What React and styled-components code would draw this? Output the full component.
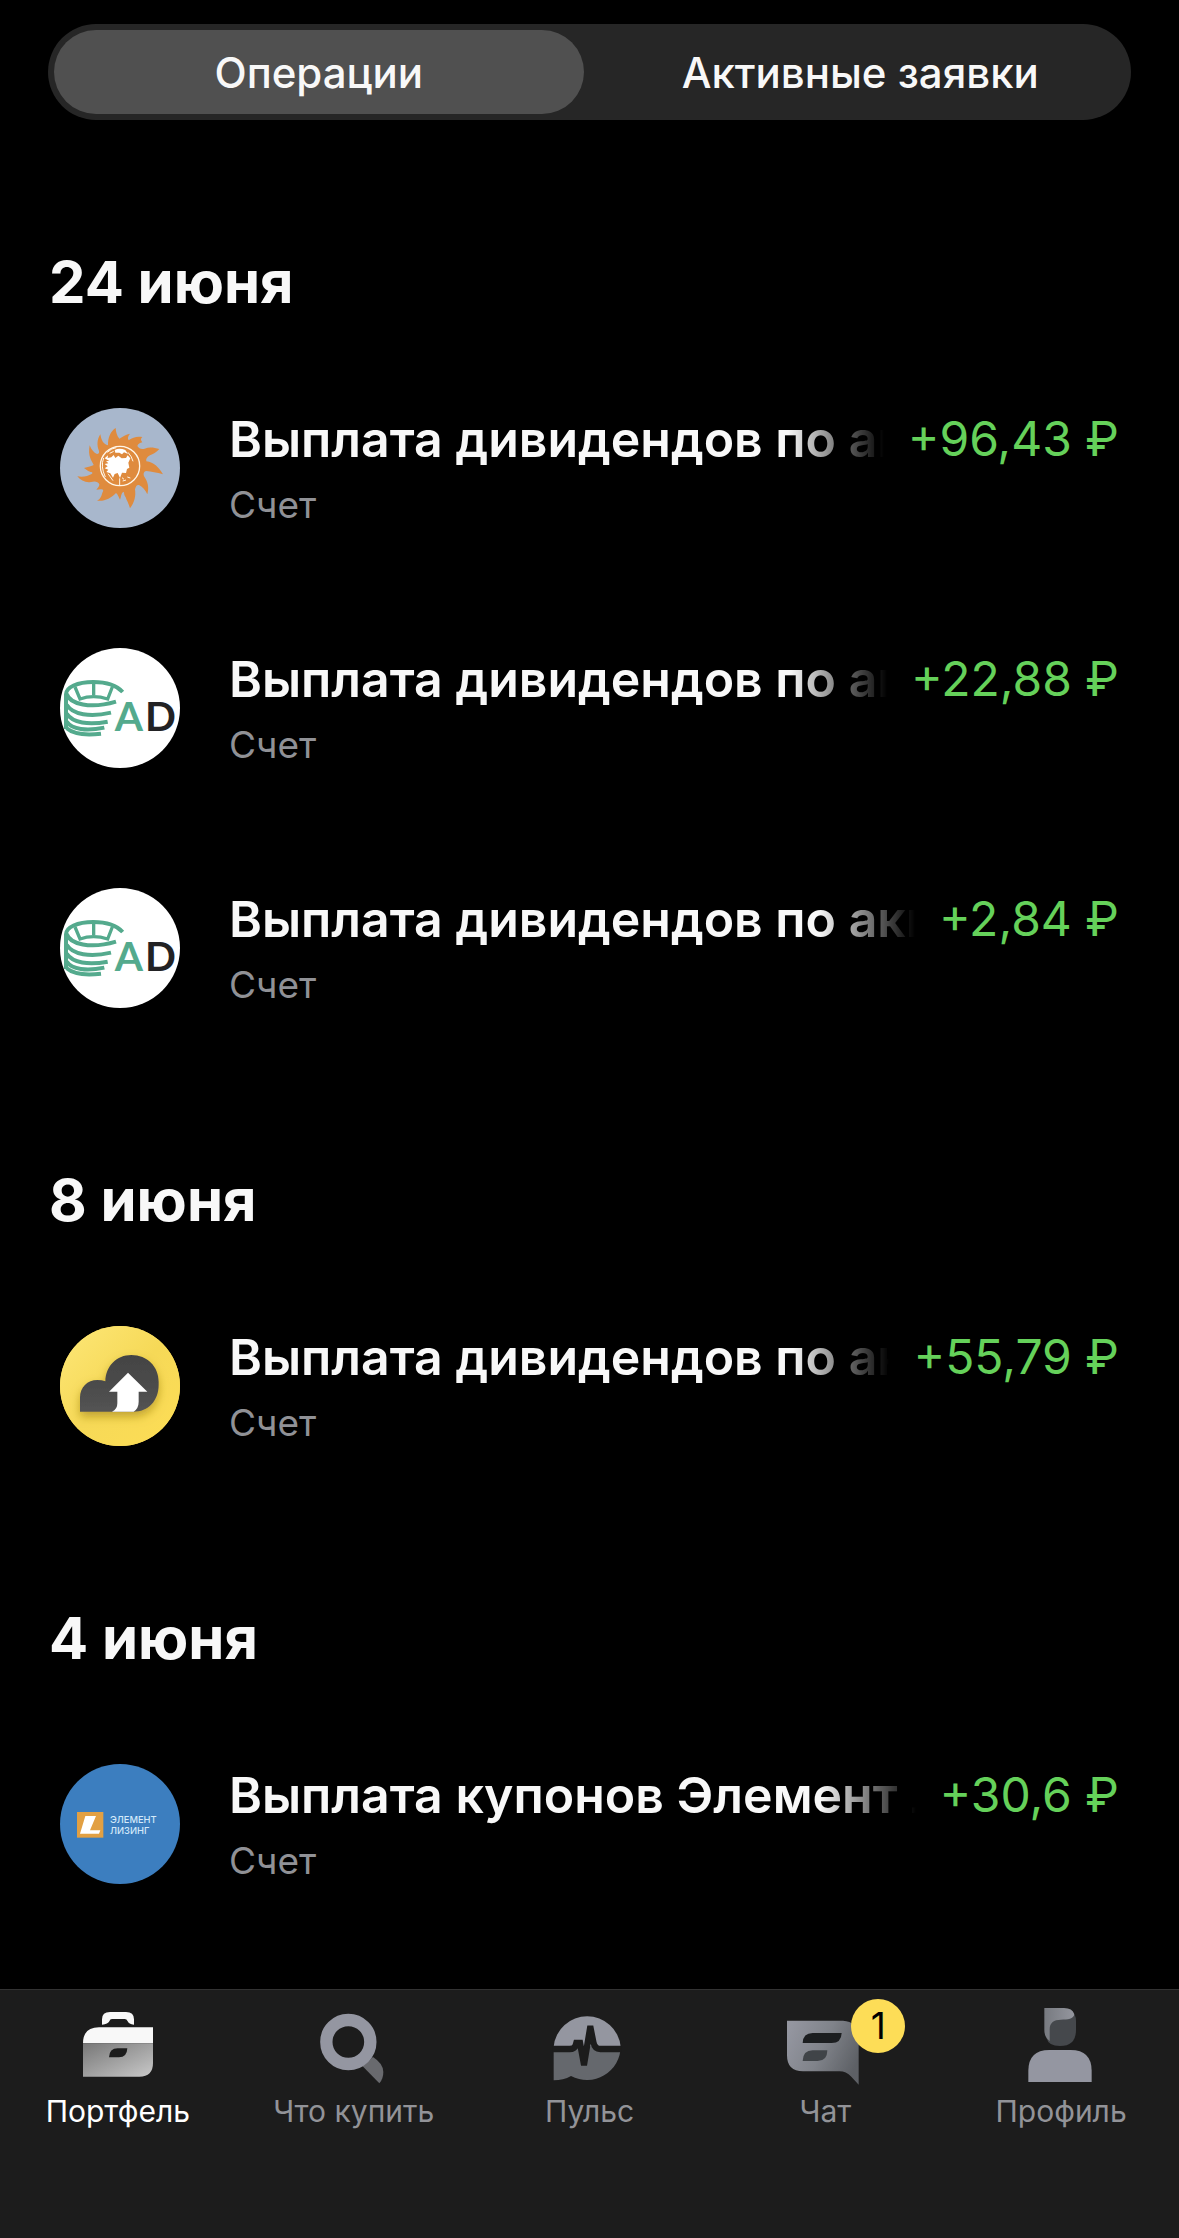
import { useState } from "react";
import styled, { createGlobalStyle } from "styled-components";

const GlobalStyle = createGlobalStyle`
  *,
  *::before,
  *::after {
    box-sizing: border-box;
  }

  body {
    margin: 0;
    background-color: #000;
    color: #f8f8f8;
    font-family: Inter, "Liberation Sans", sans-serif;
  }

  h2,
  ul,
  p {
    margin: 0;
    padding: 0;
  }
`;

const Screen = styled.div`
  display: flex;
  flex-direction: column;
  min-height: 100vh;
`;

const Content = styled.main`
  flex: 1;
  padding: 24px 48px 44px;
`;

const Segments = styled.div`
  display: grid;
  grid-template-columns: 1fr 1fr;
  gap: 12px;
  height: 96px;
  margin-bottom: 30px;
  padding: 6px;
  border-radius: 48px;
  background-color: #262626;
`;

const Segment = styled.button`
  border: none;
  border-radius: 42px;
  background-color: ${(props) => (props.$active ? "#505050" : "transparent")};
  color: #f8f8f8;
  font-family: inherit;
  font-size: 42px;
  font-weight: 500;
  cursor: pointer;
`;

const DateHeading = styled.h2`
  padding: 97px 1px 31px;
  font-size: 58px;
  font-weight: 700;
  line-height: 70px;
`;

const OperationList = styled.ul`
  list-style: none;
`;

const OperationRow = styled.li`
  display: flex;
  align-items: center;
  gap: 49px;
  height: 240px;
  padding: 0 12px;
`;

const Avatar = styled.svg`
  flex: none;
  width: 120px;
  height: 120px;
  border-radius: 50%;
  background-color: ${(props) => props.$color};
`;

const Details = styled.div`
  flex: 1;
  min-width: 0;
  padding-top: 2px;
`;

const TitleLine = styled.div`
  display: flex;
  gap: 24px;
  margin-bottom: 12px;
  line-height: 60px;
  white-space: nowrap;
`;

const Title = styled.p`
  flex: 1;
  min-width: 0;
  overflow: hidden;
  font-size: 50px;
  font-weight: 600;
  mask-image: linear-gradient(to left, transparent, #000 96px);
`;

const Amount = styled.span`
  color: #65d15a;
  font-size: 48px;
`;

const Account = styled.p`
  color: #909196;
  font-size: 37px;
  line-height: 48px;
`;

const TabBar = styled.nav`
  display: grid;
  grid-template-columns: repeat(5, 1fr);
  padding: 14px 0 106px;
  border-top: 1px solid #323232;
  background-color: #1c1c1c;
`;

const Tab = styled.a`
  display: flex;
  flex-direction: column;
  align-items: center;
  gap: 2px;
  color: ${(props) => (props.$active ? "#fff" : "#929398")};
  font-size: 30px;
  line-height: 42px;
  text-decoration: none;
`;

const TabIcon = styled.span`
  position: relative;
  display: block;
  height: 84px;

  svg {
    display: block;
    width: 84px;
    height: 84px;
  }
`;

const Badge = styled.span`
  position: absolute;
  top: -5px;
  right: -38px;
  width: 54px;
  height: 54px;
  border-radius: 50%;
  background-color: #fddd57;
  color: #000;
  font-size: 37px;
  line-height: 54px;
  text-align: center;
`;

function SunAvatar() {
  return (
    <Avatar $color="#a8b7cc" viewBox="60 54 360 360" aria-hidden="true">
      <path
        fill="#df8b3e"
        d="M204 166C203 142 212 124 227 114C228 126 230 136 238 146C248 140 258 132 270 131C264 138 262 145 266 151C279 141 292 138 307 141C301 146 302 150 307 157C300 158 294 162 292 168C297 176 304 179 314 176C328 170 343 173 358 177C349 187 339 192 330 196C321 200 317 207 319 214C342 217 357 233 369 253C350 246 334 246 319 243C310 244 309 254 314 262C323 275 328 292 322 313C315 298 307 291 297 285C290 283 287 290 285 298C288 318 284 337 270 355C266 340 260 332 257 322C250 312 254 304 249 306C243 311 244 320 240 329C236 321 234 314 228 309C212 325 194 335 171 332C182 326 184 318 187 308C192 300 190 297 181 298L169 299C174 294 178 289 178 283C174 274 164 273 153 276C138 279 122 272 112 259C130 262 144 258 155 252C160 248 156 246 150 245C142 243 138 238 132 234C144 230 156 229 161 225C154 210 143 199 149 166C155 180 161 188 171 192C177 192 178 188 177 183C170 167 171 148 181 133C184 150 189 162 204 166Z"
      />
      <circle cx="240" cy="228" r="59" fill="none" stroke="#fff6e8" strokeWidth="4" />
      <path
        fill="#fff"
        d="M224 180Q238 172 256 180L264 192L252 187L246 193L238 188L226 188ZM194 205L204 196L203 204L214 202L221 195L226 204L235 197L245 205L258 204L263 196L271 205L265 218L268 233L261 237L258 249L246 248L240 264L233 249L224 252L219 263L211 250L199 246L205 239L194 235L203 229L194 222L205 220L198 213L208 213Z"
      />
      <path
        fill="none"
        stroke="#fff6e8"
        strokeWidth="3"
        d="M191 204Q181 229 196 261M202 187Q215 174 229 173M209 190L221 184M264 187Q276 200 279 214M204 251L219 272M239 265V286M246 263L252 268M262 261L271 264M248 273L258 270"
      />
    </Avatar>
  );
}

function StackAvatar() {
  return (
    <Avatar $color="#fff" viewBox="60 54 360 360" aria-hidden="true">
      <g fill="none" stroke="#54aa8d" strokeWidth="12">
        <path d="M248 186C230 166 198 156 160 156C112 156 78 172 78 193V297" />
        <path d="M80 192C90 222 150 238 228 215" />
        <path d="M105 171L120 207Q160 193 203 207L217 171M161 158V195" strokeWidth="10" />
        <path d="M80 224C98 254 150 262 213 248" />
        <path d="M80 251C98 279 145 286 203 275" />
        <path d="M80 275C96 299 140 304 193 293" />
        <path d="M80 295C100 312 140 316 183 311" />
      </g>
      <g fontFamily="Lato, sans-serif" fontSize="122" fontWeight="700">
        <text x="224" y="303" fill="#54aa8d">
          A
        </text>
        <text x="315" y="303" fill="#222224">
          D
        </text>
      </g>
    </Avatar>
  );
}

function CloudAvatar() {
  return (
    <Avatar $color="#fbdc57" viewBox="60 48 360 360" aria-hidden="true">
      <defs>
        <linearGradient id="cloudBack" x1="0" y1="0" x2="1" y2="1">
          <stop offset="0" stopColor="#fde778" />
          <stop offset="0.5" stopColor="#f6d957" />
          <stop offset="1" stopColor="#fddd55" />
        </linearGradient>
        <linearGradient id="cloudFill" x1="0" y1="0" x2="0" y2="1">
          <stop offset="0" stopColor="#434343" />
          <stop offset="1" stopColor="#535353" />
        </linearGradient>
        <filter id="cloudShadow" x="-30%" y="-30%" width="160%" height="180%">
          <feDropShadow dx="0" dy="14" stdDeviation="14" floodColor="#9a7b12" floodOpacity="0.6" />
        </filter>
      </defs>
      <rect x="60" y="48" width="360" height="360" fill="url(#cloudBack)" />
      <path
        fill="url(#cloudFill)"
        filter="url(#cloudShadow)"
        d="M120 305V262C120 232 142 210 172 210Q186 210 196 214C197 168 230 135 274 135C322 135 356 170 356 215V224C356 272 325 305 280 305Z"
      />
      <path fill="#fff" d="M264 188L322 245H296V275Q296 295 281 305H216Q232 299 232 280V245H207Z" />
    </Avatar>
  );
}

function ElementAvatar() {
  return (
    <Avatar $color="#3c7ebf" viewBox="60 42 360 360" aria-hidden="true">
      <rect x="111" y="186" width="79" height="77" fill="#e2a043" />
      <path fill="#fff" d="M136 198H168L150 241H181L177 251H120Z" />
      <g fill="#d3e9fa" fontSize="28" fontWeight="500">
        <text x="210" y="220">
          ЭЛЕМЕНТ
        </text>
        <text x="210" y="251">
          ЛИЗИНГ
        </text>
      </g>
    </Avatar>
  );
}

function PortfolioIcon() {
  return (
    <svg viewBox="228 102 252 252" aria-hidden="true">
      <defs>
        <linearGradient id="caseFill" x1="0" y1="0" x2="1" y2="1">
          <stop offset="0" stopColor="#777" />
          <stop offset="1" stopColor="#c9c9c9" />
        </linearGradient>
      </defs>
      <path
        fill="#f8f8f8"
        d="M306 164V148Q306 126 330 126H378Q402 126 402 148V164Q386 163 383 154Q380 147 374 147H336Q330 147 328 154Q324 163 306 164ZM249 220Q249 172 297 172H459V220Z"
      />
      <path
        fill="url(#caseFill)"
        fillRule="evenodd"
        d="M249 220H459V279Q459 320 418 320H249ZM327 262Q328 235 353 235H382Q381 262 357 262Z"
      />
    </svg>
  );
}

function SearchIcon() {
  return (
    <svg viewBox="936 102 252 252" aria-hidden="true">
      <path fill="#696a6e" d="M1088 289L1119 261Q1150 281 1150 306Q1150 327 1138 340Z" />
      <circle cx="1045" cy="216" r="66" fill="none" stroke="#9496a1" strokeWidth="37" />
    </svg>
  );
}

function PulseIcon() {
  return (
    <svg viewBox="443 102 252 252" aria-hidden="true">
      <path fill="#9496a0" d="M463 230A101 101 0 0 1 664 230Z" />
      <path fill="#65686d" d="M463 230H664A101 101 0 0 1 515 318Q492 331 463 331Z" />
      <path
        fill="none"
        stroke="#1c1c1c"
        strokeWidth="19"
        d="M460 237H511Q525 237 529 226L531 219H542L553 278H555L572 176H574L582 216Q586 237 603 237H667"
      />
    </svg>
  );
}

function ChatIcon() {
  return (
    <svg viewBox="10 102 252 252" aria-hidden="true">
      <defs>
        <linearGradient id="chatFill" x1="0" y1="0.2" x2="1" y2="0.6">
          <stop offset="0" stopColor="#9496a0" />
          <stop offset="0.5" stopColor="#80838a" />
          <stop offset="1" stopColor="#5d6065" />
        </linearGradient>
      </defs>
      <path fill="url(#chatFill)" d="M22 152H190Q237 156 237 199V344L215 320Q199 304 180 304H70Q22 304 22 256Z" />
      <path fill="#1c1e20" d="M69 219Q70 189 99 189H186Q185 219 156 219Z" />
      <path fill="#404448" d="M69 273Q70 241 99 241H143Q143 273 114 273Z" />
    </svg>
  );
}

function ProfileIcon() {
  return (
    <svg viewBox="717 102 252 252" aria-hidden="true">
      <defs>
        <linearGradient id="hairFill" x1="0" y1="0" x2="1" y2="0">
          <stop offset="0" stopColor="#777a80" />
          <stop offset="1" stopColor="#94969e" />
        </linearGradient>
      </defs>
      <path fill="#45484c" d="M805 145L884 134Q888 142 888 152V180Q888 228 840 228Q805 228 800 205Z" />
      <path
        fill="url(#hairFill)"
        d="M793 114H852Q877 114 883 133C881 147 864 149 842 149C822 149 809 158 809 178V213Q793 202 793 180Z"
      />
      <path fill="#9496a1" d="M745 336V303Q745 240 808 240H872Q935 240 935 303V336Z" />
    </svg>
  );
}

const segments = ["Операции", "Активные заявки"];

const groups = [
  {
    date: "24 июня",
    operations: [
      { id: 1, logo: SunAvatar, title: "Выплата дивидендов по акциям", amount: "+96,43 ₽" },
      { id: 2, logo: StackAvatar, title: "Выплата дивидендов по акциям", amount: "+22,88 ₽" },
      { id: 3, logo: StackAvatar, title: "Выплата дивидендов по акциям", amount: "+2,84 ₽" },
    ],
  },
  {
    date: "8 июня",
    operations: [
      { id: 4, logo: CloudAvatar, title: "Выплата дивидендов по акциям", amount: "+55,79 ₽" },
    ],
  },
  {
    date: "4 июня",
    operations: [
      { id: 5, logo: ElementAvatar, title: "Выплата купонов Элемент Лизинг", amount: "+30,6 ₽" },
    ],
  },
];

const tabs = [
  { label: "Портфель", icon: PortfolioIcon, href: "#portfolio", active: true },
  { label: "Что купить", icon: SearchIcon, href: "#buy" },
  { label: "Пульс", icon: PulseIcon, href: "#pulse" },
  { label: "Чат", icon: ChatIcon, href: "#chat", badge: 1 },
  { label: "Профиль", icon: ProfileIcon, href: "#profile" },
];

function Operation({ logo: Logo, title, amount }) {
  return (
    <OperationRow>
      <Logo />
      <Details>
        <TitleLine>
          <Title>{title}</Title>
          <Amount>{amount}</Amount>
        </TitleLine>
        <Account>Счет</Account>
      </Details>
    </OperationRow>
  );
}

function App() {
  const [current, setCurrent] = useState(segments[0]);

  return (
    <Screen>
      <GlobalStyle />
      <Content>
        <Segments>
          {segments.map((name) => (
            <Segment
              key={name}
              type="button"
              $active={name === current}
              aria-pressed={name === current}
              onClick={() => setCurrent(name)}
            >
              {name}
            </Segment>
          ))}
        </Segments>

        {groups.map((group) => (
          <section key={group.date}>
            <DateHeading>{group.date}</DateHeading>
            <OperationList>
              {group.operations.map((operation) => (
                <Operation key={operation.id} {...operation} />
              ))}
            </OperationList>
          </section>
        ))}
      </Content>

      <TabBar>
        {tabs.map(({ label, icon: Icon, href, active, badge }) => (
          <Tab key={label} href={href} $active={active}>
            <TabIcon>
              <Icon />
              {badge && <Badge>{badge}</Badge>}
            </TabIcon>
            {label}
          </Tab>
        ))}
      </TabBar>
    </Screen>
  );
}

export default App;
